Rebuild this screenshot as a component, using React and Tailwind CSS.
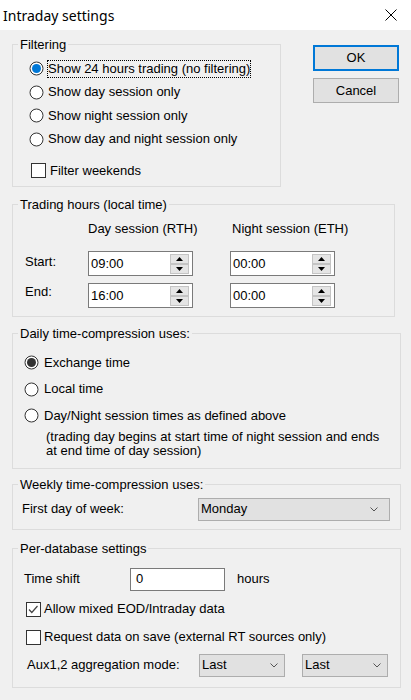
import React from 'react'

const Radio = ({ checked, dot = '#0078d7' }) => (
  <svg width="15" height="15" viewBox="0 0 15 15" className="shrink-0">
    <circle cx="7.5" cy="7.5" r="6.5" fill="#fff" stroke="#333" />
    {checked && <circle cx="7.5" cy="7.5" r="4.5" fill={dot} />}
  </svg>
)

const Check = ({ checked }) => (
  <div className="flex h-[15px] w-[15px] shrink-0 items-center justify-center border border-[#333] bg-white">
    {checked && (
      <svg width="13" height="13" viewBox="0 0 13 13">
        <polyline points="2,6.5 4.8,9.5 10.5,3" fill="none" stroke="#444" strokeWidth="1.2" />
      </svg>
    )}
  </div>
)

const Chevron = () => (
  <svg width="8" height="5" viewBox="0 0 8 5">
    <polyline points="0.5,0.5 4,4 7.5,0.5" fill="none" stroke="#555" strokeWidth="1" />
  </svg>
)

const Spin = ({ value }) => (
  <div className="flex h-[25px] w-[105px] items-center justify-between border border-[#7a7a7a] bg-white pl-[2px] pr-[3px]">
    <span>{value}</span>
    <div className="flex flex-col">
      <div className="flex h-[10px] w-[19px] items-center justify-center border border-[#c4c4c4] bg-[#e5e5e5]">
        <svg width="7" height="4" viewBox="0 0 7 4"><polygon points="3.5,0 7,4 0,4" fill="#000" /></svg>
      </div>
      <div className="flex h-[10px] w-[19px] items-center justify-center border border-[#c4c4c4] bg-[#e5e5e5]">
        <svg width="7" height="4" viewBox="0 0 7 4"><polygon points="0,0 7,0 3.5,4" fill="#000" /></svg>
      </div>
    </div>
  </div>
)

const Select = ({ value, width, pr }) => (
  <div className={`flex h-[23px] items-center justify-between border border-[#adadad] bg-[#e1e1e1] pl-[2px] ${width} ${pr}`}>
    <span>{value}</span>
    <Chevron />
  </div>
)

const Legend = ({ children }) => (
  <legend className="ml-[5px] px-[2px] leading-[15px]">{children}</legend>
)

const FILTERS = [
  'Show 24 hours trading (no filtering)',
  'Show day session only',
  'Show night session only',
  'Show day and night session only',
]

export default function App() {
  return (
    <div className="h-[700px] w-[411px] overflow-hidden bg-[#f0f0f0] font-['Tahoma','Liberation_Sans',sans-serif] text-[13px] text-black">
      {/* Title bar */}
      <div className="flex h-[30px] items-center justify-between bg-white pl-[3px] pr-[14px]">
        <span className="font-['Segoe_UI','Noto_Sans',sans-serif] text-[14px]">Intraday settings</span>
        <svg width="12" height="12" viewBox="0 0 12 12">
          <path d="M0.5 0.5 L11.5 11.5 M11.5 0.5 L0.5 11.5" stroke="#000" strokeWidth="1" />
        </svg>
      </div>

      <div className="pl-[12px]">
        {/* Filtering + buttons */}
        <div className="flex">
          <fieldset className="mt-[7px] w-[269px] border border-[#dcdcdc] pb-[8px]">
            <Legend>Filtering</Legend>
            <div className="pt-[5px]">
              {FILTERS.map((f, i) => (
                <div key={f} className="flex h-[23.5px] items-center pl-[16px]">
                  <Radio checked={i === 0} />
                  <span className={`ml-[3px] border border-dotted leading-[16px] ${i === 0 ? 'border-black' : 'border-transparent'}`}>
                    {f}
                  </span>
                </div>
              ))}
            </div>
            <div className="mt-[12px] flex h-[15px] items-center pl-[18px]">
              <Check />
              <span className="ml-[4px]">Filter weekends</span>
            </div>
          </fieldset>

          <div className="ml-[32px] flex flex-col pt-[15px]">
            <div className="flex h-[26px] w-[86px] items-center justify-center border-2 border-[#0078d7] bg-[#e1e1e1]">OK</div>
            <div className="mt-[7px] flex h-[25px] w-[86px] items-center justify-center border border-[#adadad] bg-[#e1e1e1]">Cancel</div>
          </div>
        </div>

        {/* Trading hours */}
        <fieldset className="mt-[10px] w-[383px] border border-[#dcdcdc] pb-[8px]">
          <Legend>Trading hours (local time)</Legend>
          <div className="mt-[9px] flex h-[16px] items-center">
            <span className="ml-[75px] w-[144px]">Day session (RTH)</span>
            <span>Night session (ETH)</span>
          </div>
          <div className="mt-[14px] flex items-start pl-[12px]">
            <span className="mt-[3px] w-[63px] leading-[15px]">Start:</span>
            <Spin value="09:00" />
            <div className="ml-[37px]"><Spin value="00:00" /></div>
          </div>
          <div className="mt-[7px] flex items-start pl-[12px]">
            <span className="mt-[1px] w-[63px] leading-[15px]">End:</span>
            <Spin value="16:00" />
            <div className="ml-[37px]"><Spin value="00:00" /></div>
          </div>
        </fieldset>

        {/* Daily */}
        <fieldset className="mt-[9px] w-[389px] border border-[#dcdcdc] pb-[10px]">
          <Legend>Daily time-compression uses:</Legend>
          <div className="mt-[8.5px]">
            {['Exchange time', 'Local time', 'Day/Night session times as defined above'].map((t, i) => (
              <div key={t} className="flex h-[26.4px] items-center pl-[11px]">
                <Radio checked={i === 0} dot="#333" />
                <span className="ml-[5px]">{t}</span>
              </div>
            ))}
          </div>
          <p className="mt-[1px] pl-[33px] leading-[14px]">
            (trading day begins at start time of night session and ends
            <br />
            at end time of day session)
          </p>
        </fieldset>

        {/* Weekly */}
        <fieldset className="mt-[8px] w-[389px] border border-[#dcdcdc] pb-[8px]">
          <Legend>Weekly time-compression uses:</Legend>
          <div className="mt-[6px] flex items-center pl-[9px]">
            <span className="w-[176px]">First day of week:</span>
            <Select value="Monday" width="w-[192px]" pr="pr-[11px]" />
          </div>
        </fieldset>

        {/* Per-database */}
        <fieldset className="mt-[11px] w-[389px] border border-[#dcdcdc] pb-[10px]">
          <Legend>Per-database settings</Legend>
          <div className="mt-[12px] flex items-center pl-[11px]">
            <span className="w-[106px]">Time shift</span>
            <div className="flex h-[23px] w-[95px] items-center border border-[#7a7a7a] bg-white pl-[5px]">0</div>
            <span className="ml-[12px]">hours</span>
          </div>
          <div className="mt-[11px] flex h-[15px] items-center pl-[13px]">
            <Check checked />
            <span className="ml-[3px]">Allow mixed EOD/Intraday data</span>
          </div>
          <div className="mt-[13px] flex h-[15px] items-center pl-[13px]">
            <Check />
            <span className="ml-[3px]">Request data on save (external RT sources only)</span>
          </div>
          <div className="mt-[9px] flex items-center pl-[14px]">
            <span className="w-[172px]">Aux1,2 aggregation mode:</span>
            <Select value="Last" width="w-[86px]" pr="pr-[6px]" />
            <div className="ml-[17px]"><Select value="Last" width="w-[86px]" pr="pr-[6px]" /></div>
          </div>
        </fieldset>
      </div>
    </div>
  )
}
